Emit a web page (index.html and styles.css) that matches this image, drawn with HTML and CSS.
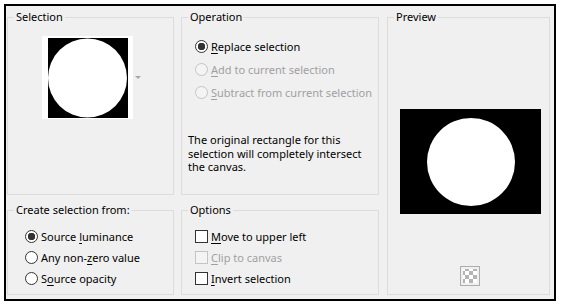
FILE: index.html
```html
<!DOCTYPE html>
<html lang="en">
<head>
    <meta charset="UTF-8">
    <meta name="viewport" content="width=device-width, initial-scale=1.0">
    <title>Selection from Mask</title>
    <link rel="stylesheet" href="styles.css">
</head>
<body>
    <div class="dialog">
        <fieldset class="group group-selection">
            <legend>Selection</legend>
            <div class="thumb-wrap">
                <div class="thumb">
                    <svg width="80" height="80" viewBox="0 0 80 80">
                        <rect width="80" height="80" fill="#000"/>
                        <circle cx="39.5" cy="40" r="39.5" fill="#fff"/>
                    </svg>
                </div>
                <span class="drop-arrow"></span>
            </div>
        </fieldset>

        <fieldset class="group group-operation">
            <legend>Operation</legend>
            <div class="choices">
                <label class="row"><input type="radio" name="op" class="radio" checked><span><u>R</u>eplace selection</span></label>
                <label class="row disabled"><input type="radio" name="op" class="radio" disabled><span><u>A</u>dd to current selection</span></label>
                <label class="row disabled"><input type="radio" name="op" class="radio" disabled><span><u>S</u>ubtract from current selection</span></label>
            </div>
            <p class="note">The original rectangle for this<br>selection will completely intersect<br>the canvas.</p>
        </fieldset>

        <fieldset class="group group-preview">
            <legend>Preview</legend>
            <div class="preview-box">
                <svg class="preview-img" width="141" height="105" viewBox="0 0 141 105">
                    <rect width="141" height="105" fill="#000"/>
                    <circle cx="71" cy="53" r="44" fill="#fff"/>
                </svg>
                <span class="transparency-btn"></span>
            </div>
        </fieldset>

        <fieldset class="group group-source">
            <legend>Create selection from:</legend>
            <div class="choices choices-small">
                <label class="row"><input type="radio" name="src" class="radio" checked><span>Source <u>l</u>uminance</span></label>
                <label class="row"><input type="radio" name="src" class="radio"><span>Any non-<u>z</u>ero value</span></label>
                <label class="row"><input type="radio" name="src" class="radio"><span>S<u>o</u>urce opacity</span></label>
            </div>
        </fieldset>

        <fieldset class="group group-options">
            <legend>Options</legend>
            <div class="choices choices-small">
                <label class="row"><input type="checkbox" class="check"><span><u>M</u>ove to upper left</span></label>
                <label class="row disabled"><input type="checkbox" class="check" disabled><span><u>C</u>lip to canvas</span></label>
                <label class="row"><input type="checkbox" class="check"><span><u>I</u>nvert selection</span></label>
            </div>
        </fieldset>
    </div>
</body>
</html>
```

FILE: styles.css
```css
body {
    margin: 0;
    background: #fff;
    font-family: "Noto Sans", sans-serif;
    font-size: 11px;
    line-height: 16px;
    color: #000;
}

.dialog {
    box-sizing: border-box;
    margin: 4px;
    width: 552px;
    height: 297px;
    border: 2px solid #000;
    background: #f0f0f0;
    padding: 3px 0 0 1px;
    display: grid;
    grid-template-columns: 167px 198px 164px;
    grid-template-rows: 186px 93px;
    column-gap: 7px;
    row-gap: 7px;
}

.group {
    margin: 0;
    padding: 0;
    min-width: 0;
    border: 1px solid #dcdcdc;
}
.group legend {
    margin-left: 6px;
    padding: 0 2px;
    line-height: 16px;
}

.group-selection { grid-column: 1; grid-row: 1; }
.group-operation { grid-column: 2; grid-row: 1; }
.group-preview { grid-column: 3; grid-row: 1 / 3; margin-left: 1px; }
.group-source { grid-column: 1; grid-row: 2; }
.group-options { grid-column: 2; grid-row: 2; }

/* selection thumbnail */
.thumb-wrap {
    display: flex;
    align-items: center;
    margin: 11px 0 0 34px;
}
.thumb {
    background: #fff;
    padding: 2px 5px 1px 6px;
}
.thumb svg {
    display: block;
}
.drop-arrow {
    margin-left: 2px;
    width: 0;
    height: 0;
    border-top: 3px solid #a8a8a8;
    border-left: 3px solid transparent;
    border-right: 3px solid transparent;
}

/* radio / checkbox rows */
.choices {
    margin: 10px 0 0 13px;
}
.choices-small {
    margin-top: 8px;
}
.group-source .choices {
    margin-left: 17px;
}
.row {
    display: flex;
    align-items: center;
    gap: 3px;
    height: 23px;
    white-space: nowrap;
}
.choices-small .row {
    height: 21px;
}
.row.disabled {
    color: #a0a0a0;
}
.row u {
    text-decoration-thickness: 1px;
    text-underline-offset: 2px;
}

.radio {
    appearance: none;
    margin: 0;
    width: 13px;
    height: 13px;
    border: 1px solid #333;
    border-radius: 50%;
    background: #fff;
}
.radio:checked {
    background: radial-gradient(circle, #333 0 3.5px, #fff 4px);
}
.radio:disabled {
    border-color: #c4c4c4;
    background: #f4f4f4;
}

.check {
    appearance: none;
    margin: 0;
    width: 13px;
    height: 13px;
    border: 1px solid #333;
    background: #fff;
}
.check:disabled {
    border-color: #c4c4c4;
    background: #f4f4f4;
}

.note {
    margin: 29px 0 0 6px;
    line-height: 13.5px;
    white-space: nowrap;
}

/* preview */
.preview-box {
    display: flex;
    flex-direction: column;
    align-items: center;
    padding-left: 3px;
}
.preview-img {
    display: block;
    margin-top: 84px;
}
.transparency-btn {
    margin-top: 52px;
    box-sizing: border-box;
    width: 20px;
    height: 20px;
    border: 1px solid #adadad;
    padding: 2px;
    background: repeating-conic-gradient(#b4b4b4 0 25%, #fff 0 50%) 2px 2px / 8px 8px;
    background-clip: content-box;
    background-origin: content-box;
}
```
